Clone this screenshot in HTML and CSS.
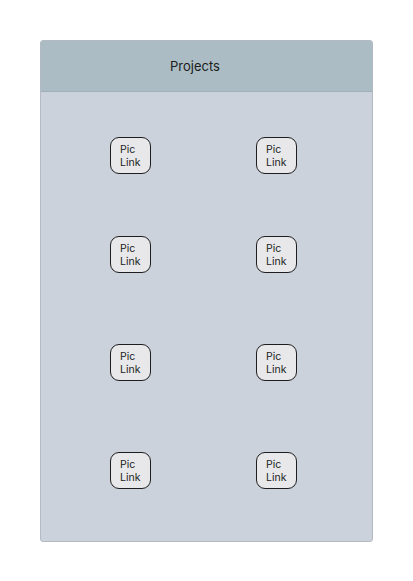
FILE: index.html
```html
<!DOCTYPE html>
<html>
<head>
<meta charset="utf-8">
<link rel="stylesheet" href="styles.css">
</head>
<body>
<div class="card">
  <div class="card-header">Projects</div>
  <div class="card-body">
    <div class="grid">
      <a class="pic">Pic<br>Link</a><a class="pic">Pic<br>Link</a>
      <a class="pic">Pic<br>Link</a><a class="pic">Pic<br>Link</a>
      <a class="pic">Pic<br>Link</a><a class="pic">Pic<br>Link</a>
      <a class="pic">Pic<br>Link</a><a class="pic">Pic<br>Link</a>
    </div>
  </div>
</div>
</body>
</html>
```
FILE: styles.css
```css
html, body { margin: 0; padding: 0; background: #ffffff; }
body { padding: 40px 0 0 40px; font-family: Inter, "Noto Sans", sans-serif; color: #1c1c1c; }
.card {
  width: 333px;
  height: 502px;
  box-sizing: border-box;
  border: 1px solid #b4bac2;
  border-radius: 3px;
  background: #cbd2dc;
  display: flex;
  flex-direction: column;
  overflow: hidden;
}
.card-header {
  height: 50px;
  background: #abbcc4;
  border-bottom: 1px solid #9eb0b9;
  display: flex;
  align-items: center;
  padding-left: 129px;
  font-size: 13px;
}
.card-body { flex: 1; padding-top: 45px; }
.grid {
  display: grid;
  grid-template-columns: 41px 41px;
  column-gap: 105px;
  padding-left: 69px;
}
.pic:nth-child(n+3) { margin-top: 62px; }
.pic:nth-child(n+5) { margin-top: 71px; }
.pic {
  width: 41px;
  height: 37px;
  box-sizing: border-box;
  border: 1px solid #1e1e1e;
  border-radius: 9px;
  background: #e8e8ea;
  font-size: 10.5px;
  line-height: 13px;
  padding: 5px 0 0 9px;
  color: #222;
}
```
